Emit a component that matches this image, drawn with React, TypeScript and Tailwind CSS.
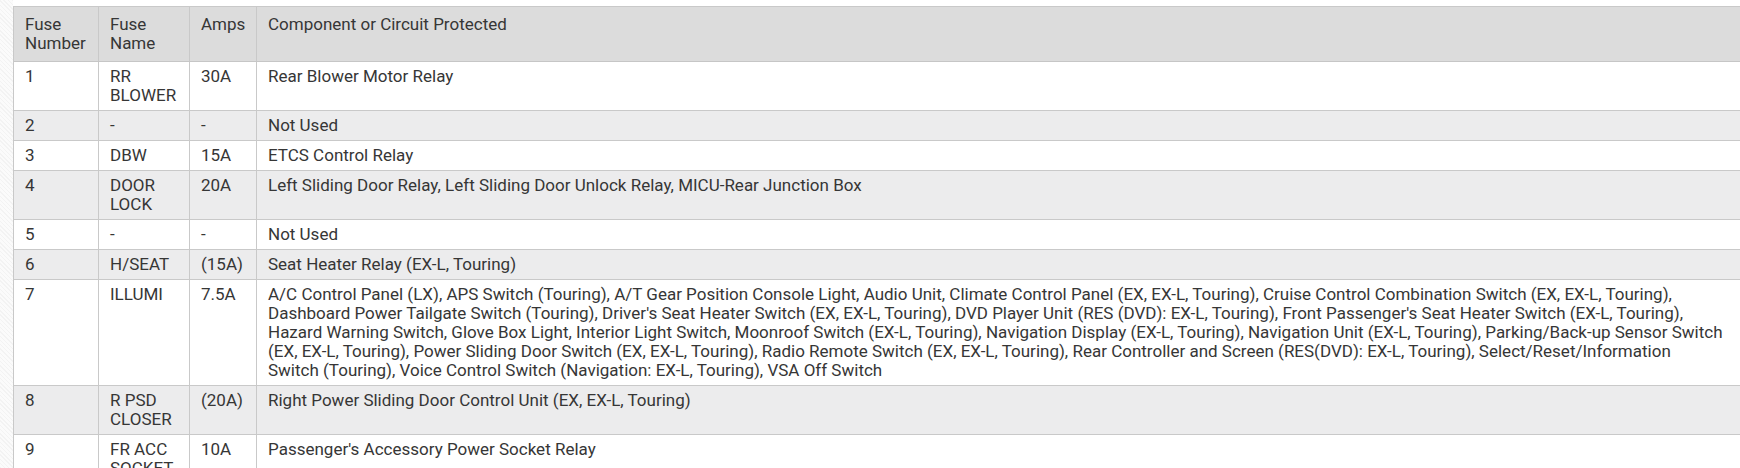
import React from "react";

type Row = { n: string; name: string; amps: string; comp: string | string[] };

const rows: Row[] = [
  { n: "1", name: "RR BLOWER", amps: "30A", comp: "Rear Blower Motor Relay" },
  { n: "2", name: "-", amps: "-", comp: "Not Used" },
  { n: "3", name: "DBW", amps: "15A", comp: "ETCS Control Relay" },
  {
    n: "4",
    name: "DOOR LOCK",
    amps: "20A",
    comp: "Left Sliding Door Relay, Left Sliding Door Unlock Relay, MICU-Rear Junction Box",
  },
  { n: "5", name: "-", amps: "-", comp: "Not Used" },
  { n: "6", name: "H/SEAT", amps: "(15A)", comp: "Seat Heater Relay (EX-L, Touring)" },
  {
    n: "7",
    name: "ILLUMI",
    amps: "7.5A",
    comp: [
      "A/C Control Panel (LX), APS Switch (Touring), A/T Gear Position Console Light, Audio Unit, Climate Control Panel (EX, EX-L, Touring), Cruise Control Combination Switch (EX, EX-L, Touring),",
      "Dashboard Power Tailgate Switch (Touring), Driver's Seat Heater Switch (EX, EX-L, Touring), DVD Player Unit (RES (DVD): EX-L, Touring), Front Passenger's Seat Heater Switch (EX-L, Touring),",
      "Hazard Warning Switch, Glove Box Light, Interior Light Switch, Moonroof Switch (EX-L, Touring), Navigation Display (EX-L, Touring), Navigation Unit (EX-L, Touring), Parking/Back-up Sensor Switch",
      "(EX, EX-L, Touring), Power Sliding Door Switch (EX, EX-L, Touring), Radio Remote Switch (EX, EX-L, Touring), Rear Controller and Screen (RES(DVD): EX-L, Touring), Select/Reset/Information",
      "Switch (Touring), Voice Control Switch (Navigation: EX-L, Touring), VSA Off Switch",
    ],
  },
  {
    n: "8",
    name: "R PSD CLOSER",
    amps: "(20A)",
    comp: "Right Power Sliding Door Control Unit (EX, EX-L, Touring)",
  },
  { n: "9", name: "FR ACC SOCKET", amps: "10A", comp: "Passenger's Accessory Power Socket Relay" },
];

const cell = "border-r border-[#c9c9c9] px-[11px]";

export default function App() {
  return (
    <div
      className="w-[1740px] h-[468px] overflow-hidden bg-white flex text-[#363636] text-[17px] leading-[19px]"
      style={{ fontFamily: "Roboto, 'Liberation Sans', sans-serif" }}
    >
      <div className="w-[13px] shrink-0 bg-[repeating-linear-gradient(45deg,#f3f3f3_0px,#f3f3f3_1px,#fbfbfb_1px,#fbfbfb_3px)]" />
      <div className="pt-[6px] shrink-0">
        <div className="w-[1748px] border-l border-t border-[#c9c9c9]">
          <div className="grid grid-cols-[85px_91px_67px_1fr] bg-[#dcdcdc] border-b border-[#c6c6c6]">
            <div className={`${cell} py-[8px]`}>Fuse Number</div>
            <div className={`${cell} py-[8px]`}>Fuse Name</div>
            <div className={`${cell} py-[8px]`}>Amps</div>
            <div className={`${cell} py-[8px]`}>Component or Circuit Protected</div>
          </div>
          {rows.map((r, i) => (
            <div
              key={r.n}
              className={`grid grid-cols-[85px_91px_67px_1fr] border-b border-[#c9c9c9] ${
                i % 2 === 0 ? "bg-white" : "bg-[#ececed]"
              }`}
            >
              <div className={`${cell} py-[5px]`}>{r.n}</div>
              <div className={`${cell} py-[5px]`}>{r.name}</div>
              <div className={`${cell} py-[5px]`}>{r.amps}</div>
              <div className={`${cell} py-[5px]`}>
                {Array.isArray(r.comp)
                  ? r.comp.map((line, j) => (
                      <div key={j} className="whitespace-nowrap">
                        {line}
                      </div>
                    ))
                  : r.comp}
              </div>
            </div>
          ))}
        </div>
      </div>
    </div>
  );
}
